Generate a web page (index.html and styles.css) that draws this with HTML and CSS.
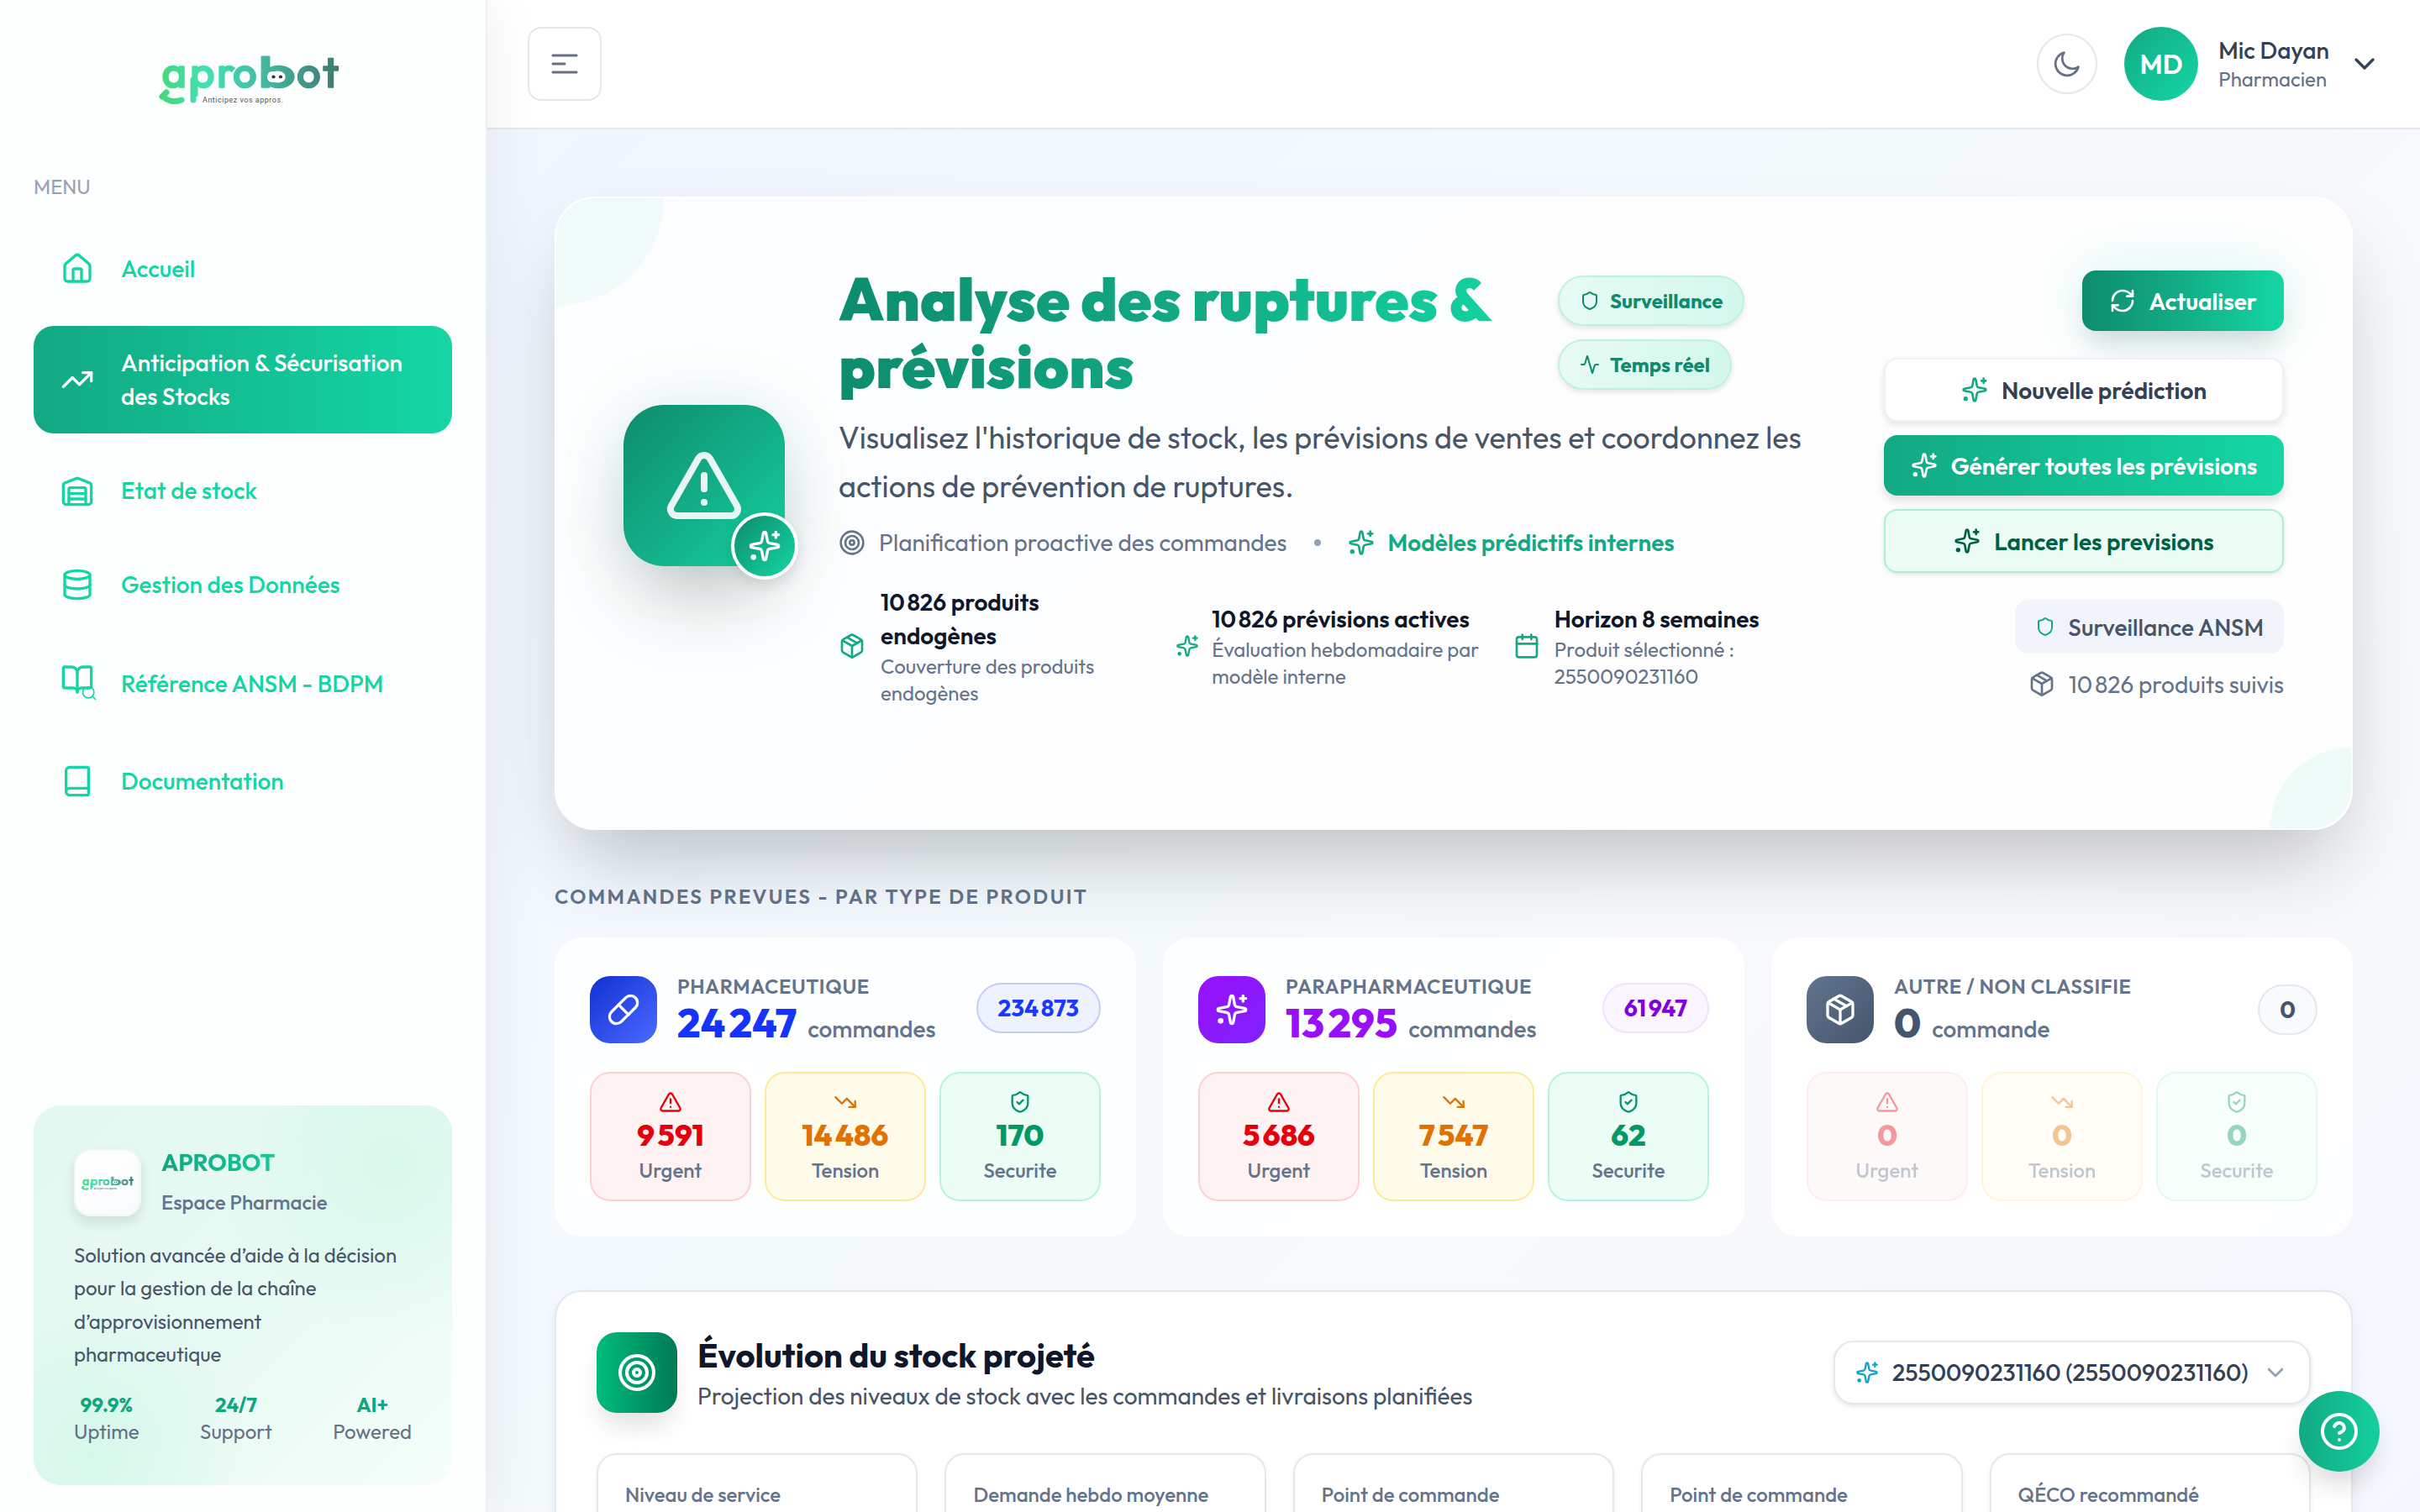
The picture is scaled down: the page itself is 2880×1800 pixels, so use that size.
FILE: index.html
```html
<!DOCTYPE html>
<html lang="fr">

<head>
    <meta charset="UTF-8">
    <meta name="viewport" content="width=device-width, initial-scale=1.0">
    <title>Aprobot - Analyse des ruptures</title>
    <link rel="stylesheet" href="styles.css">
</head>

<body>
    <!-- shared icons -->
    <svg class="sprite" xmlns="http://www.w3.org/2000/svg">
        <defs>
            <linearGradient id="logo-fill" gradientUnits="userSpaceOnUse" x1="0" y1="0" x2="218" y2="0">
                <stop offset="0" stop-color="#43d978" />
                <stop offset=".27" stop-color="#43e0b4" />
                <stop offset=".55" stop-color="#43bda3" />
                <stop offset="1" stop-color="#44756f" />
            </linearGradient>
            <symbol id="logo" viewBox="0 0 218 62">
                <g class="logo-letters">
                    <text y="41" x="4.5 38 70 89">apro</text>
                    <text y="41" x="119" textLength="45" lengthAdjust="spacingAndGlyphs">b</text>
                    <text y="41" x="165 196">ot</text>
                </g>
                <path class="logo-line" d="M42 32V56" />
                <path class="logo-line" d="M5 52L10 47M6 51C11 58 20 59 28 56" />
                <rect x="130" y="22" width="20" height="13" rx="6" fill="#fff" />
                <circle cx="137.5" cy="28.5" r="2.1" fill="#333" />
                <circle cx="146" cy="28.5" r="2.1" fill="#333" />
                <text class="logo-tag" x="53" y="59" textLength="96">Anticipez vos appros.</text>
            </symbol>
            <symbol id="home" viewBox="0 0 24 24"><path d="M15 21v-8a1 1 0 0 0-1-1h-4a1 1 0 0 0-1 1v8" /><path d="M3 10a2 2 0 0 1 .709-1.528l7-5.999a2 2 0 0 1 2.582 0l7 5.999A2 2 0 0 1 21 10v9a2 2 0 0 1-2 2H5a2 2 0 0 1-2-2z" /></symbol>
            <symbol id="trend-up" viewBox="0 0 24 24"><path d="M22 7l-8.5 8.5-5-5L2 17" /><path d="M16 7h6v6" /></symbol>
            <symbol id="trend-down" viewBox="0 0 24 24"><path d="M22 17l-8.5-8.5-5 5L2 7" /><path d="M16 17h6v-6" /></symbol>
            <symbol id="warehouse" viewBox="0 0 24 24"><path d="M22 8.35V20a2 2 0 0 1-2 2H4a2 2 0 0 1-2-2V8.35A2 2 0 0 1 3.26 6.5l8-3.2a2 2 0 0 1 1.48 0l8 3.2A2 2 0 0 1 22 8.35Z" /><path d="M6 18h12M6 14h12" /><path d="M18 22V11a1 1 0 0 0-1-1H7a1 1 0 0 0-1 1v11" /></symbol>
            <symbol id="database" viewBox="0 0 24 24"><ellipse cx="12" cy="5" rx="9" ry="3" /><path d="M3 5v14a9 3 0 0 0 18 0V5" /><path d="M3 12a9 3 0 0 0 18 0" /></symbol>
            <symbol id="book-open" viewBox="0 0 24 24"><path d="M12 7v14" /><path d="M3 18a1 1 0 0 1-1-1V4a1 1 0 0 1 1-1h5a4 4 0 0 1 4 4 4 4 0 0 1 4-4h5a1 1 0 0 1 1 1v13a1 1 0 0 1-1 1h-6a3 3 0 0 0-3 3 3 3 0 0 0-3-3z" /></symbol>
            <symbol id="search" viewBox="0 0 24 24"><circle cx="11" cy="11" r="8" /><path d="M21 21l-4.3-4.3" /></symbol>
            <symbol id="book" viewBox="0 0 24 24"><path d="M4 19.5v-15A2.5 2.5 0 0 1 6.5 2H19a1 1 0 0 1 1 1v18a1 1 0 0 1-1 1H6.5a1 1 0 0 1 0-5H20" /></symbol>
            <symbol id="alert" viewBox="0 0 24 24"><path d="M21.73 18l-8-14a2 2 0 0 0-3.48 0l-8 14A2 2 0 0 0 4 21h16a2 2 0 0 0 1.73-3" /><path d="M12 9v4M12 17h.01" /></symbol>
            <symbol id="sparkles" viewBox="0 0 24 24"><path d="M11.017 2.814a1 1 0 0 1 1.966 0l1.051 5.558a2 2 0 0 0 1.594 1.594l5.558 1.051a1 1 0 0 1 0 1.966l-5.558 1.051a2 2 0 0 0-1.594 1.594l-1.051 5.558a1 1 0 0 1-1.966 0l-1.051-5.558a2 2 0 0 0-1.594-1.594l-5.558-1.051a1 1 0 0 1 0-1.966l5.558-1.051a2 2 0 0 0 1.594-1.594z" /><path d="M20 2v4M22 4h-4" /><circle cx="4" cy="20" r="1" /></symbol>
            <symbol id="shield" viewBox="0 0 24 24"><path d="M20 13c0 5-3.5 7.5-7.66 8.95a1 1 0 0 1-.67-.01C7.5 20.5 4 18 4 13V6a1 1 0 0 1 1-1c2 0 4.5-1.2 6.24-2.72a1.17 1.17 0 0 1 1.52 0C14.51 3.81 17 5 19 5a1 1 0 0 1 1 1z" /></symbol>
            <symbol id="shield-check" viewBox="0 0 24 24"><path d="M20 13c0 5-3.5 7.5-7.66 8.95a1 1 0 0 1-.67-.01C7.5 20.5 4 18 4 13V6a1 1 0 0 1 1-1c2 0 4.5-1.2 6.24-2.72a1.17 1.17 0 0 1 1.52 0C14.51 3.81 17 5 19 5a1 1 0 0 1 1 1z" /><path d="M9 12l2 2 4-4" /></symbol>
            <symbol id="activity" viewBox="0 0 24 24"><path d="M22 12h-2.48a2 2 0 0 0-1.93 1.46l-2.35 8.36a.25.25 0 0 1-.48 0L9.24 2.18a.25.25 0 0 0-.48 0l-2.35 8.36A2 2 0 0 1 4.49 12H2" /></symbol>
            <symbol id="target" viewBox="0 0 24 24"><circle cx="12" cy="12" r="10" /><circle cx="12" cy="12" r="6" /><circle cx="12" cy="12" r="2" /></symbol>
            <symbol id="package" viewBox="0 0 24 24"><path d="M11 21.73a2 2 0 0 0 2 0l7-4A2 2 0 0 0 21 16V8a2 2 0 0 0-1-1.73l-7-4a2 2 0 0 0-2 0l-7 4A2 2 0 0 0 3 8v8a2 2 0 0 0 1 1.73z" /><path d="M12 22V12" /><path d="M3.29 7L12 12l8.71-5" /><path d="M7.5 4.27l9 5.15" /></symbol>
            <symbol id="calendar" viewBox="0 0 24 24"><path d="M8 2v4M16 2v4" /><rect x="3" y="4" width="18" height="18" rx="2" /><path d="M3 10h18" /></symbol>
            <symbol id="refresh" viewBox="0 0 24 24"><path d="M3 12a9 9 0 0 1 9-9 9.75 9.75 0 0 1 6.74 2.74L21 8" /><path d="M21 3v5h-5" /><path d="M21 12a9 9 0 0 1-9 9 9.75 9.75 0 0 1-6.74-2.74L3 16" /><path d="M8 16H3v5" /></symbol>
            <symbol id="pill" viewBox="0 0 24 24"><path d="M10.5 20.5l10-10a4.95 4.95 0 1 0-7-7l-10 10a4.95 4.95 0 1 0 7 7Z" /><path d="M8.5 8.5l7 7" /></symbol>
            <symbol id="chevron" viewBox="0 0 24 24"><path d="M6 9l6 6 6-6" /></symbol>
            <symbol id="help" viewBox="0 0 24 24"><circle cx="12" cy="12" r="10" /><path d="M9.09 9a3 3 0 0 1 5.83 1c0 2-3 3-3 3" /><path d="M12 17h.01" /></symbol>
            <symbol id="moon" viewBox="0 0 20 20"><path d="M17.455 11.97A7.71 7.71 0 1 1 8.03 2.545A6.76 6.76 0 0 0 17.455 11.97Z" /></symbol>
            <symbol id="menu" viewBox="0 0 32 24"><path d="M2 2h28M2 12h14M2 22h28" /></symbol>
        </defs>
    </svg>

    <aside class="sidebar">
        <svg class="logo"><use href="#logo" /></svg>
        <h3 class="menu-title">MENU</h3>
        <nav class="menu">
            <a class="menu-item"><svg class="icon"><use href="#home" /></svg>Accueil</a>
            <a class="menu-item active"><svg class="icon"><use href="#trend-up" /></svg>Anticipation &amp; Sécurisation des Stocks</a>
            <a class="menu-item"><svg class="icon"><use href="#warehouse" /></svg>Etat de stock</a>
            <a class="menu-item"><svg class="icon"><use href="#database" /></svg>Gestion des Données</a>
            <a class="menu-item tall">
                <span class="icon-stack">
                    <svg class="icon"><use href="#book-open" /></svg>
                    <svg class="icon icon-mini"><use href="#search" /></svg>
                </span>
                Référence ANSM - BDPM
            </a>
            <a class="menu-item"><svg class="icon"><use href="#book" /></svg>Documentation</a>
        </nav>

        <div class="brand-card">
            <div class="brand-head">
                <div class="brand-tile"><svg class="brand-logo"><use href="#logo" /></svg></div>
                <div>
                    <p class="brand-name">APROBOT</p>
                    <p class="brand-sub">Espace Pharmacie</p>
                </div>
            </div>
            <p class="brand-text">Solution avancée d’aide à la décision pour la gestion de la chaîne d’approvisionnement pharmaceutique</p>
            <div class="brand-stats">
                <div><b>99.9%</b>Uptime</div>
                <div><b>24/7</b>Support</div>
                <div><b>AI+</b>Powered</div>
            </div>
        </div>
    </aside>

    <div class="page">
        <header class="topbar">
            <button class="toggle"><svg class="icon"><use href="#menu" /></svg></button>
            <div class="user">
                <button class="theme"><svg class="icon"><use href="#moon" /></svg></button>
                <span class="avatar">MD</span>
                <div class="user-text">
                    <p class="user-name">Mic Dayan</p>
                    <p class="user-role">Pharmacien</p>
                </div>
                <svg class="icon user-chevron"><use href="#chevron" /></svg>
            </div>
        </header>

        <main class="content">
            <section class="hero">
                <span class="blob blob-top"></span>
                <span class="blob blob-bottom"></span>
                <div class="hero-tile">
                    <svg class="icon"><use href="#alert" /></svg>
                    <span class="hero-badge"><svg class="icon"><use href="#sparkles" /></svg></span>
                </div>

                <div class="hero-body">
                    <div class="hero-top">
                        <h1>Analyse des ruptures &amp; prévisions</h1>
                        <div class="tags">
                            <span class="tag"><svg class="icon"><use href="#shield" /></svg>Surveillance</span>
                            <span class="tag"><svg class="icon"><use href="#activity" /></svg>Temps réel</span>
                        </div>
                    </div>
                    <p class="hero-text">Visualisez l'historique de stock, les prévisions de ventes et coordonnez les actions de prévention de ruptures.</p>
                    <div class="hero-meta">
                        <span class="meta"><svg class="icon"><use href="#target" /></svg>Planification proactive des commandes</span>
                        <span class="dot"></span>
                        <span class="meta strong"><svg class="icon"><use href="#sparkles" /></svg>Modèles prédictifs internes</span>
                    </div>
                    <div class="features">
                        <div class="feature wide">
                            <svg class="icon"><use href="#package" /></svg>
                            <div><b>10&#8239;826 produits endogènes</b><p>Couverture des produits endogènes</p></div>
                        </div>
                        <div class="feature narrow">
                            <svg class="icon"><use href="#sparkles" /></svg>
                            <div><b>10&#8239;826 prévisions actives</b><p>Évaluation hebdomadaire par modèle interne</p></div>
                        </div>
                        <div class="feature">
                            <svg class="icon"><use href="#calendar" /></svg>
                            <div><b>Horizon 8 semaines</b><p>Produit sélectionné : 2550090231160</p></div>
                        </div>
                    </div>
                </div>

                <div class="hero-actions">
                    <button class="btn btn-refresh"><svg class="icon"><use href="#refresh" /></svg>Actualiser</button>
                    <div class="btn-group">
                        <button class="btn btn-light"><svg class="icon"><use href="#sparkles" /></svg>Nouvelle prédiction</button>
                        <button class="btn btn-green"><svg class="icon"><use href="#sparkles" /></svg>Générer toutes les prévisions</button>
                        <button class="btn btn-mint"><svg class="icon"><use href="#sparkles" /></svg>Lancer les previsions</button>
                    </div>
                    <div class="info">
                        <span class="info-chip"><svg class="icon"><use href="#shield" /></svg>Surveillance ANSM</span>
                        <span class="info-line"><svg class="icon"><use href="#package" /></svg>10&#8239;826 produits suivis</span>
                    </div>
                </div>
            </section>

            <h2 class="section-title">COMMANDES PREVUES - PAR TYPE DE PRODUIT</h2>
            <section class="types">
                <article class="type blue">
                    <div class="type-head">
                        <div class="type-tile"><svg class="icon"><use href="#pill" /></svg></div>
                        <div class="type-text">
                            <p class="type-label">PHARMACEUTIQUE</p>
                            <p class="type-count"><b>24&#8239;247</b><span>commandes</span></p>
                        </div>
                        <span class="type-total">234&#8239;873</span>
                    </div>
                    <div class="levels">
                        <div class="level urgent"><svg class="icon"><use href="#alert" /></svg><b>9&#8239;591</b><span>Urgent</span></div>
                        <div class="level tension"><svg class="icon"><use href="#trend-down" /></svg><b>14&#8239;486</b><span>Tension</span></div>
                        <div class="level secure"><svg class="icon"><use href="#shield-check" /></svg><b>170</b><span>Securite</span></div>
                    </div>
                </article>
                <article class="type purple">
                    <div class="type-head">
                        <div class="type-tile"><svg class="icon"><use href="#sparkles" /></svg></div>
                        <div class="type-text">
                            <p class="type-label">PARAPHARMACEUTIQUE</p>
                            <p class="type-count"><b>13&#8239;295</b><span>commandes</span></p>
                        </div>
                        <span class="type-total">61&#8239;947</span>
                    </div>
                    <div class="levels">
                        <div class="level urgent"><svg class="icon"><use href="#alert" /></svg><b>5&#8239;686</b><span>Urgent</span></div>
                        <div class="level tension"><svg class="icon"><use href="#trend-down" /></svg><b>7&#8239;547</b><span>Tension</span></div>
                        <div class="level secure"><svg class="icon"><use href="#shield-check" /></svg><b>62</b><span>Securite</span></div>
                    </div>
                </article>
                <article class="type slate">
                    <div class="type-head">
                        <div class="type-tile"><svg class="icon"><use href="#package" /></svg></div>
                        <div class="type-text">
                            <p class="type-label">AUTRE / NON CLASSIFIE</p>
                            <p class="type-count"><b>0</b><span>commande</span></p>
                        </div>
                        <span class="type-total">0</span>
                    </div>
                    <div class="levels empty">
                        <div class="level urgent"><svg class="icon"><use href="#alert" /></svg><b>0</b><span>Urgent</span></div>
                        <div class="level tension"><svg class="icon"><use href="#trend-down" /></svg><b>0</b><span>Tension</span></div>
                        <div class="level secure"><svg class="icon"><use href="#shield-check" /></svg><b>0</b><span>Securite</span></div>
                    </div>
                </article>
            </section>

            <section class="panel">
                <div class="panel-head">
                    <div class="panel-tile"><svg class="icon"><use href="#target" /></svg></div>
                    <div class="panel-text">
                        <h2>Évolution du stock projeté</h2>
                        <p>Projection des niveaux de stock avec les commandes et livraisons planifiées</p>
                    </div>
                    <div class="select">
                        <svg class="icon select-icon"><use href="#sparkles" /></svg>
                        <span>2550090231160 (2550090231160)</span>
                        <svg class="icon select-arrow"><use href="#chevron" /></svg>
                    </div>
                </div>
                <div class="kpis">
                    <div class="kpi">Niveau de service</div>
                    <div class="kpi">Demande hebdo moyenne</div>
                    <div class="kpi">Point de commande</div>
                    <div class="kpi">Point de commande</div>
                    <div class="kpi">QÉCO recommandé</div>
                </div>
            </section>
        </main>
    </div>

    <button class="help"><svg class="icon"><use href="#help" /></svg></button>
</body>

</html>
```
FILE: styles.css
```css
* {
    box-sizing: border-box;
    margin: 0;
    padding: 0;
}
body {
    display: flex;
    width: 2880px;
    height: 1800px;
    overflow: hidden;
    font-family: Outfit, Lato, sans-serif;
    font-size: 28px;
    color: #0f172a;
    background: linear-gradient(135deg, #eff4ff 0%, #f3f9fd 45%, #f8f9fc 70%, #f6f7fd 100%);
}
button {
    font: inherit;
    border: none;
}
.sprite {
    position: absolute;
    width: 0;
    height: 0;
}
.icon {
    display: block;
    flex-shrink: 0;
    width: 32px;
    height: 32px;
    overflow: visible;
    fill: none;
    stroke: currentColor;
    stroke-width: 2;
    stroke-linecap: round;
    stroke-linejoin: round;
}

/* logo */
.logo-letters {
    font-family: Outfit, Lato, sans-serif;
    font-size: 51px;
    font-weight: 500;
    fill: url(#logo-fill);
    stroke: url(#logo-fill);
    stroke-width: 1.5;
    stroke-linejoin: round;
}
.logo-line {
    fill: none;
    stroke: url(#logo-fill);
    stroke-width: 7;
    stroke-linecap: round;
}
.logo-tag {
    font-family: Roboto, sans-serif;
    font-size: 9px;
    fill: #555;
}

/* sidebar */
.sidebar {
    position: relative;
    z-index: 2;
    display: flex;
    flex-direction: column;
    flex-shrink: 0;
    width: 580px;
    height: 1800px;
    padding: 0 40px 32px;
    background: #fdfefe;
    border-right: 2px solid #eceff3;
    box-shadow: 8px 0 60px rgba(0, 0, 0, 0.06);
}
.logo {
    width: 218px;
    height: 62px;
    margin: 63px 0 0 148px;
}
.menu-title {
    margin-top: 81px;
    font-size: 24px;
    font-weight: 400;
    line-height: 32px;
    color: #98a2b3;
}
.menu {
    display: flex;
    flex-direction: column;
    gap: 24px;
    margin-top: 38px;
}
.menu-item {
    display: flex;
    align-items: center;
    gap: 32px;
    height: 88px;
    padding: 0 32px;
    font-weight: 500;
    line-height: 40px;
    color: #14d6a4;
}
.menu-item.tall {
    height: 98px;
    padding-top: 2px;
}
.menu-item.active {
    height: 128px;
    color: #fff;
    background: linear-gradient(90deg, #12a984, #14d6a4);
    border-radius: 24px;
}
.menu-item .icon {
    width: 40px;
    height: 40px;
}
.icon-stack {
    position: relative;
    margin-top: -10px;
}
.icon-stack .icon-mini {
    position: absolute;
    right: -4px;
    bottom: -6px;
    width: 20px;
    height: 20px;
    stroke-width: 2;
}
.brand-card {
    margin-top: auto;
    height: 452px;
    padding: 48px;
    background: radial-gradient(circle at 86% 16%, rgba(190, 245, 220, 0.4), transparent 36%),
        radial-gradient(circle at 14% 92%, rgba(190, 245, 220, 0.45), transparent 32%),
        linear-gradient(135deg, #e3f8f1, #e8faf4 55%, #f5fefb);
    border-radius: 32px;
}
.brand-head {
    display: flex;
    align-items: center;
    gap: 24px;
}
.brand-tile {
    display: flex;
    align-items: center;
    justify-content: center;
    width: 80px;
    height: 80px;
    background: linear-gradient(135deg, #fff, #f8fafc);
    border: 2px solid #f3f5f7;
    border-radius: 20px;
    box-shadow: 0 8px 14px rgba(0, 0, 0, 0.1);
}
.brand-logo {
    width: 64px;
    height: 18px;
}
.brand-name {
    font-weight: 700;
    line-height: 40px;
    background: linear-gradient(90deg, #12a67f, #14cf9e 80%);
    -webkit-background-clip: text;
    background-clip: text;
    color: transparent;
}
.brand-sub {
    margin-top: 8px;
    font-size: 24px;
    font-weight: 500;
    line-height: 39px;
    color: #64748b;
}
.brand-text {
    margin-top: 24px;
    font-size: 24px;
    line-height: 39.4px;
    color: #475569;
}
.brand-stats {
    display: flex;
    justify-content: space-between;
    margin-top: 23px;
    font-size: 24px;
    line-height: 32px;
    text-align: center;
    color: #667085;
}
.brand-stats b {
    display: block;
    font-weight: 700;
    color: #12a67f;
}

/* top bar */
.page {
    flex: 1;
    height: 1800px;
    overflow: hidden;
}
.topbar {
    display: flex;
    align-items: center;
    justify-content: space-between;
    height: 154px;
    padding: 0 48px;
    background: #fff;
    border-bottom: 2px solid #e4e7ec;
}
.toggle {
    display: flex;
    align-items: center;
    justify-content: center;
    width: 88px;
    height: 88px;
    color: #667085;
    background: #fff;
    border: 2px solid #e4e7ec;
    border-radius: 16px;
}
.toggle .icon {
    width: 32px;
    height: 24px;
    stroke-width: 3;
}
.user {
    display: flex;
    align-items: center;
}
.theme {
    display: flex;
    align-items: center;
    justify-content: center;
    width: 72px;
    height: 72px;
    margin-right: 32px;
    color: #667085;
    background: #fff;
    border: 2px solid #e4e7ec;
    border-radius: 50%;
}
.theme .icon {
    width: 36px;
    height: 36px;
    stroke-width: 1.5;
}
.avatar {
    display: flex;
    align-items: center;
    justify-content: center;
    width: 88px;
    height: 88px;
    margin-right: 24px;
    font-size: 32px;
    font-weight: 600;
    color: #fff;
    background: linear-gradient(135deg, #12a984, #14d6a4);
    border-radius: 50%;
}
.user-name {
    font-weight: 500;
    line-height: 36px;
    color: #334155;
}
.user-role {
    font-size: 24px;
    line-height: 33px;
    color: #667085;
}
.user-chevron {
    width: 40px;
    height: 40px;
    margin-left: 22px;
    margin-right: -2px;
    color: #334155;
}

/* hero */
.content {
    padding: 80px;
}
.hero {
    position: relative;
    display: flex;
    align-items: center;
    gap: 64px;
    height: 754px;
    padding: 80px 80px 146px;
    overflow: hidden;
    background: linear-gradient(135deg, #fcfdfe, #fefefe);
    border: 2px solid #fff;
    border-radius: 48px;
    box-shadow: 0 50px 100px -24px rgba(0, 0, 0, 0.25);
}
.blob {
    position: absolute;
    border-radius: 50%;
    background: linear-gradient(135deg, #edfaf8, #f2fcfa);
}
.blob-top {
    top: -128px;
    left: -128px;
    width: 256px;
    height: 256px;
}
.blob-bottom {
    right: -96px;
    bottom: -96px;
    width: 192px;
    height: 192px;
}
.hero-tile {
    position: relative;
    display: flex;
    align-items: center;
    justify-content: center;
    flex-shrink: 0;
    width: 192px;
    height: 192px;
    color: rgba(255, 255, 255, 0.9);
    background: linear-gradient(135deg, #0d8c6d, #12a984 45%, #14cf9e);
    border-radius: 48px;
    box-shadow: 0 50px 100px -24px rgba(0, 0, 0, 0.25), 0 0 80px rgba(18, 169, 132, 0.12);
}
.hero-tile > .icon {
    width: 96px;
    height: 96px;
}
.hero-badge {
    position: absolute;
    right: -16px;
    bottom: -16px;
    display: flex;
    align-items: center;
    justify-content: center;
    width: 80px;
    height: 80px;
    color: #fff;
    background: linear-gradient(135deg, #0d8c6d, #14d6a4);
    border: 4px solid #fff;
    border-radius: 50%;
    box-shadow: 0 8px 16px rgba(0, 0, 0, 0.1);
}
.hero-badge .icon {
    width: 40px;
    height: 40px;
}
.hero-body {
    flex: 1;
}
.hero-top {
    display: flex;
    align-items: center;
    gap: 32px;
}
h1 {
    flex: 1;
    font-size: 72px;
    font-weight: 900;
    line-height: 80px;
    background: linear-gradient(90deg, #0d8c6d, #12a984 50%, #14d6a4);
    -webkit-background-clip: text;
    background-clip: text;
    color: transparent;
}
.tags {
    display: flex;
    flex-direction: column;
    align-items: flex-start;
    gap: 16px;
    width: 324px;
}
.tag {
    display: flex;
    align-items: center;
    gap: 12px;
    height: 60px;
    padding: 0 24px;
    font-size: 24px;
    font-weight: 700;
    color: #0d8c6d;
    background: linear-gradient(90deg, #e7fbf5, #d3f7ec);
    border: 2px solid #bff1e2;
    border-radius: 30px;
    box-shadow: 0 3px 6px rgba(0, 0, 0, 0.1);
}
.tag .icon {
    width: 24px;
    height: 24px;
}
.hero-text {
    margin-top: 16px;
    font-size: 36px;
    line-height: 58.5px;
    color: #475569;
}
.hero-meta {
    display: flex;
    align-items: center;
    gap: 32px;
    height: 40px;
    margin-top: 17px;
    color: #64748b;
}
.meta {
    display: flex;
    align-items: center;
    gap: 16px;
}
.meta.strong {
    font-weight: 600;
    color: #12a984;
}
.dot {
    width: 8px;
    height: 8px;
    background: #90a1b9;
    border-radius: 50%;
}
.features {
    display: grid;
    grid-template-columns: repeat(3, 1fr);
    gap: 24px;
    margin-top: 31px;
}
.feature {
    display: flex;
    align-items: center;
    gap: 17px;
}
.feature .icon {
    color: #12a984;
}
.feature.wide {
    gap: 18px;
}
.feature.narrow {
    gap: 15px;
}
.feature.narrow .icon {
    width: 28px;
    height: 28px;
}
.feature b {
    display: block;
    font-weight: 600;
    line-height: 40px;
}
.feature p {
    font-size: 24px;
    line-height: 32px;
    color: #64748b;
}
.hero-actions {
    display: flex;
    flex-direction: column;
    align-items: flex-end;
    gap: 32px;
    flex-shrink: 0;
}
.btn {
    display: flex;
    align-items: center;
    justify-content: center;
    gap: 16px;
    height: 76px;
    padding: 0 30px;
    font-weight: 600;
    white-space: nowrap;
    border-radius: 16px;
}
.btn-group {
    display: flex;
    flex-direction: column;
    gap: 16px;
    width: 476px;
}
.btn-refresh {
    height: 72px;
    padding: 0 32px;
    gap: 15px;
    color: #fff;
    background: linear-gradient(90deg, #0d8c6d, #12a984 45%, #14d6a4);
    box-shadow: 0 20px 30px -6px rgba(0, 0, 0, 0.12), 0 0 70px rgba(20, 214, 164, 0.18);
}
.btn-light {
    color: #334155;
    background: #fff;
    border: 2px solid #eef1f8;
    box-shadow: 0 4px 8px rgba(0, 0, 0, 0.1);
}
.btn-light .icon {
    color: #12a984;
}
.btn-green {
    height: 72px;
    color: #fff;
    background: linear-gradient(90deg, #12a984, #14d6a4);
    box-shadow: 0 6px 12px rgba(0, 0, 0, 0.12);
}
.btn-mint {
    color: #006045;
    background: #ecfdf5;
    border: 2px solid #a4f4cf;
    box-shadow: 0 2px 6px rgba(0, 0, 0, 0.1);
}
.info {
    display: flex;
    flex-direction: column;
    align-items: flex-end;
    gap: 16px;
}
.info-chip {
    display: flex;
    align-items: center;
    gap: 15px;
    height: 64px;
    padding: 0 24px;
    font-weight: 500;
    color: #475569;
    background: #f1f4fa;
    border-radius: 16px;
}
.info-chip .icon {
    width: 24px;
    height: 24px;
    color: #12a984;
}
.info-line {
    display: flex;
    align-items: center;
    gap: 16px;
    height: 40px;
    color: #64748b;
}

/* orders by product type */
.section-title {
    margin: 63px 0 33px;
    font-size: 24px;
    font-weight: 600;
    line-height: 32px;
    letter-spacing: 2.4px;
    color: #64748b;
}
.types {
    display: grid;
    grid-template-columns: repeat(3, 1fr);
    gap: 32px;
}
.type {
    height: 356px;
    padding: 42px;
    background: rgba(255, 255, 255, 0.9);
    border-radius: 32px;
}
.type-head {
    display: flex;
    align-items: center;
    height: 88px;
    margin-bottom: 30px;
}
.type-tile {
    display: flex;
    align-items: center;
    justify-content: center;
    width: 80px;
    height: 80px;
    margin-right: 24px;
    color: #fff;
    border-radius: 24px;
}
.type-tile .icon {
    width: 40px;
    height: 40px;
}
.type-text {
    flex: 1;
    margin-top: -3px;
}
.type-label {
    font-size: 24px;
    font-weight: 600;
    line-height: 32px;
    letter-spacing: 0.6px;
    color: #64748b;
}
.type-count {
    display: flex;
    align-items: baseline;
    gap: 13px;
    height: 54px;
    line-height: 54px;
}
.type-count b {
    font-size: 48px;
    font-weight: 800;
}
.type-count span {
    font-weight: 500;
    color: #64748b;
}
.type-total {
    height: 60px;
    margin-bottom: 4px;
    padding: 0 24px;
    font-weight: 700;
    line-height: 56px;
    border: 2px solid;
    border-radius: 30px;
}
.blue .type-tile {
    background: linear-gradient(135deg, #1230d2, #4a6aff);
}
.blue .type-count b {
    color: #1433ff;
}
.blue .type-total {
    color: #1a38ff;
    background: #eef2ff;
    border-color: #c2cdff;
}
.purple .type-tile {
    background: linear-gradient(135deg, #9810fa, #7f22fe);
}
.purple .type-count b {
    color: #9810fa;
}
.purple .type-total {
    color: #8200db;
    background: #faf5ff;
    border-color: #f0e2ff;
}
.slate .type-tile {
    background: linear-gradient(135deg, #62748e, #45556c);
}
.slate .type-count b {
    color: #45556c;
}
.slate .type-total {
    margin-bottom: 0;
    color: #45556c;
    background: #f8fafc;
    border-color: #e2e8f0;
}
.levels {
    display: grid;
    grid-template-columns: repeat(3, 1fr);
    gap: 16px;
}
.levels.empty .level {
    opacity: 0.4;
}
.level {
    display: flex;
    flex-direction: column;
    align-items: center;
    height: 154px;
    padding-top: 20px;
    border: 2px solid;
    border-radius: 24px;
}
.level .icon {
    width: 28px;
    height: 28px;
}
.level b {
    margin: 5px 0 6px;
    font-size: 36px;
    font-weight: 800;
    line-height: 40px;
}
.level span {
    font-size: 24px;
    font-weight: 500;
    line-height: 32px;
    color: #64748b;
}
.urgent {
    color: #e7000b;
    background: #fef2f2;
    border-color: #ffd0d0;
}
.tension {
    color: #e17100;
    background: #fffbeb;
    border-color: #fee999;
}
.secure {
    color: #009966;
    background: #ecfdf5;
    border-color: #b5f5d8;
}

/* stock projection */
.panel {
    margin-top: 64px;
    padding: 48px;
    background: #fff;
    border: 2px solid #e2e8f0;
    border-radius: 32px;
    box-shadow: 0 8px 20px rgba(0, 0, 0, 0.06);
}
.panel-head {
    display: flex;
    align-items: center;
    gap: 24px;
}
.panel-tile {
    display: flex;
    align-items: center;
    justify-content: center;
    width: 96px;
    height: 96px;
    color: #fff;
    background: linear-gradient(90deg, #00bc7d, #007a55);
    border-radius: 24px;
    box-shadow: 0 20px 30px -6px rgba(0, 0, 0, 0.12);
}
.panel-tile .icon {
    width: 48px;
    height: 48px;
}
.panel-text {
    flex: 1;
    padding-top: 3px;
}
.panel-text h2 {
    font-size: 40px;
    font-weight: 700;
    line-height: 48px;
}
.panel-text p {
    margin-top: 5px;
    line-height: 40px;
    color: #475569;
}
.select {
    display: flex;
    align-items: center;
    width: 568px;
    height: 76px;
    padding: 0 24px;
    font-weight: 500;
    line-height: 34px;
    color: #334155;
    background: #fff;
    border: 2px solid #e2e8f0;
    border-radius: 24px;
    box-shadow: 0 2px 6px rgba(0, 0, 0, 0.1);
}
.select .icon {
    width: 28px;
    height: 28px;
}
.select-icon {
    margin-right: 16px;
    color: #0ea5c6;
}
.select .select-arrow {
    width: 32px;
    height: 32px;
    margin-left: auto;
    color: #90a1b9;
}
.kpis {
    display: grid;
    grid-template-columns: repeat(5, 1fr);
    gap: 32px;
    margin-top: 48px;
}
.kpi {
    height: 220px;
    padding: 31px 32px;
    font-size: 24px;
    font-weight: 500;
    line-height: 32px;
    color: #64748b;
    background: #fff;
    border: 2px solid #e2e8f0;
    border-radius: 24px;
    box-shadow: 0 2px 6px rgba(0, 0, 0, 0.06);
}
.help {
    position: fixed;
    right: 48px;
    bottom: 48px;
    display: flex;
    align-items: center;
    justify-content: center;
    width: 96px;
    height: 96px;
    color: #fff;
    background: linear-gradient(90deg, #12a984, #14cf9e);
    border-radius: 50%;
    box-shadow: 0 20px 30px -6px rgba(0, 0, 0, 0.15);
}
.help .icon {
    width: 48px;
    height: 48px;
}
```
